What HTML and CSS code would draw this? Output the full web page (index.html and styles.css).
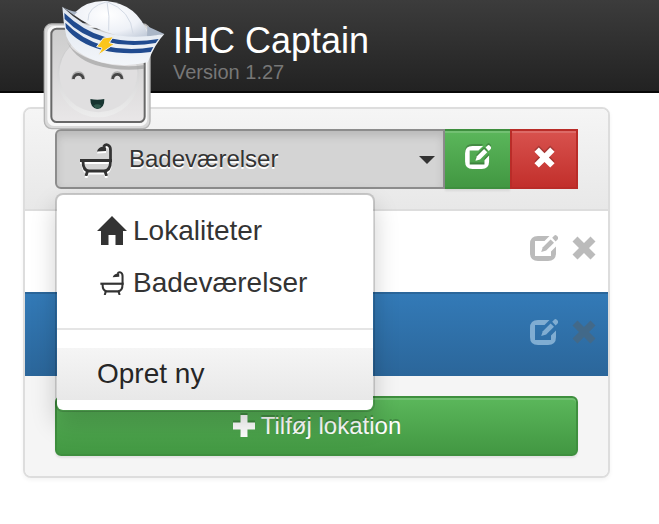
FILE: index.html
```html
<!DOCTYPE html>
<html lang="da">
<head>
    <meta charset="UTF-8">
    <meta name="viewport" content="width=device-width, initial-scale=1.0">
    <title>IHC Captain</title>
    <link rel="stylesheet" href="styles.css">
</head>
<body>
    <!-- Shared icons -->
    <svg class="icon-defs" aria-hidden="true">
        <symbol id="icon-bath" viewBox="0 0 32 33">
            <path d="M30.500 18V7C30.500 1.500 25.500 0 23.500 4" fill="none" stroke="currentColor" stroke-width="2.800"/>
            <path d="M17 8.500C18 5 22 2.500 26 4.500L26 8Z" fill="currentColor"/>
            <path d="M0 17.500H32" stroke="currentColor" stroke-width="3"/>
            <path d="M3 18C3 25 5 28 9 28H24C28 28 30.500 25 30.500 18" fill="none" stroke="currentColor" stroke-width="2.800"/>
            <path d="M7.500 28L6 33M25 28L26.500 33" stroke="currentColor" stroke-width="2.800"/>
        </symbol>
        <symbol id="icon-home" viewBox="0 0 30 30">
            <path d="M15 0L30 15H26V29H18.500V19H11.500V29H4V15H0Z" fill="currentColor"/>
        </symbol>
        <symbol id="icon-edit" viewBox="0 0 28 26">
            <path d="M19.500 1H8Q0 1 0 9V18Q0 26 8 26H18Q26 26 26 18V11.500L21 16.500V21H5V6H14.500Z" fill="currentColor"/>
            <path d="M11.200 17L12.800 12.200L20.600 4.400L24 7.800L16.200 15.600Z" fill="currentColor"/>
            <path d="M22.200 2.800L24.400 .6Q25.500 -.5 26.800 .8L27.800 1.800Q29 3 27.800 4.200L25.600 6.400Z" fill="currentColor"/>
        </symbol>
        <symbol id="icon-remove" viewBox="0 0 24 24">
            <path d="M5.500 .5L12 7L18.500 .5L23.500 5.500L17 12L23.500 18.500L18.500 23.500L12 17L5.500 23.500L.5 18.500L7 12L.5 5.500Z" fill="currentColor"/>
        </symbol>
        <symbol id="icon-plus" viewBox="0 0 24 24">
            <path d="M8.500 1H15.500V8.500H23V15.500H15.500V23H8.500V15.500H1V8.500H8.500Z" fill="currentColor"/>
        </symbol>
    </svg>

    <header class="navbar">
        <svg class="logo" viewBox="36 0 375 390" aria-hidden="true">
            <defs>
                <linearGradient id="plate" x1="0" y1="0" x2="0" y2="1">
                    <stop offset="0" stop-color="#ccc"/>
                    <stop offset="1" stop-color="#e9e7e8"/>
                </linearGradient>
                <linearGradient id="face" x1="0" y1="0" x2="0" y2="1">
                    <stop offset="0" stop-color="#c4c4c5"/>
                    <stop offset="1" stop-color="#ededed"/>
                </linearGradient>
                <radialGradient id="crown" cx=".45" cy=".35" r=".75">
                    <stop offset="0" stop-color="#fff"/>
                    <stop offset=".6" stop-color="#eef1f7"/>
                    <stop offset="1" stop-color="#c3ccda"/>
                </radialGradient>
                <linearGradient id="brim" x1="0" y1="0" x2="0" y2="1">
                    <stop offset="0" stop-color="#dde4ee"/>
                    <stop offset="1" stop-color="#f3f6fa"/>
                </linearGradient>
            </defs>
            <rect x="43" y="72" width="317" height="314" rx="22" fill="#d9d9d9" stroke="#b5b5b5" stroke-width="4"/>
            <rect x="52" y="78" width="300" height="300" rx="20" fill="#f8f8f8"/>
            <rect x="64" y="86" width="280" height="280" rx="16" fill="url(#plate)" stroke="#686868" stroke-width="6"/>
            <circle cx="205" cy="228" r="124" fill="url(#face)"/>
            <circle cx="205" cy="220" r="117" fill="#e0dfe0"/>
            <path d="M126 238Q128 216 145 216Q162 216 163 238M244 238Q246 216 262 216Q277 216 279 238" fill="none" stroke="#aaa" stroke-width="4"/>
            <path d="M130 237Q132 223 145 223Q158 223 160 237M248 237Q250 223 262 223Q274 223 276 237" fill="none" stroke="#454545" stroke-width="8"/>
            <path d="M181 297Q202 301 223 297Q224 326 202 327Q181 325 181 297Z" fill="#183531"/>
            <path d="M190 317Q202 309 214 317Q209 326 202 326Q195 325 190 317Z" fill="#31594d"/>
            <path d="M107 115Q121 160 200 184Q270 206 344 195L342 206Q270 216 196 195Q128 174 107 115Z" fill="#929292" opacity=".55"/>
            <path d="M136 36Q172 0 229 3Q323 12 354 103L346 120Q222 111 131 44Z" fill="url(#crown)"/>
            <path d="M231 5Q172 20 174 61M231 5Q240 49 236 92M231 5Q303 32 309 101" fill="none" stroke="#d3dae5" stroke-width="3"/>
            <path d="M97 20Q114 31 142 36L132 46Z" fill="#aab6c7"/>
            <path d="M352 79L403 102L351 113Z" fill="#aab6c7"/>
            <path d="M97 20Q157 78 218 96Q301 121 403 102Q376 130 353 187Q283 204 213 187Q132 165 109 109Q99 66 97 20Z" fill="url(#brim)"/>
            <path d="M103 39Q159 93 227 112Q301 131 386 117L377 129Q300 142 223 125Q151 107 104 57Z" fill="#214b8f"/>
            <path d="M106 68Q153 116 221 137Q295 155 370 141L362 156Q284 166 216 150Q143 130 108 85Z" fill="#214b8f"/>
            <path d="M220 114L250 110L238 128L253 132L205 165L216 144L200 140Z" fill="#fbc51b" stroke="#eef1f7" stroke-width="3"/>
        </svg>
        <div class="brand">
            <h1>IHC Captain</h1>
            <span class="version">Version 1.27</span>
        </div>
    </header>

    <main class="panel">
        <div class="panel-heading">
            <div class="btn-group">
                <button type="button" class="btn btn-select" aria-haspopup="true" aria-expanded="true">
                    <svg class="icon-bath"><use href="#icon-bath"/></svg>
                    <span>Badeværelser</span>
                    <span class="caret"></span>
                </button>
                <button type="button" class="btn btn-success btn-edit" aria-label="Rediger">
                    <svg class="icon-edit"><use href="#icon-edit"/></svg>
                </button>
                <button type="button" class="btn btn-danger" aria-label="Slet">
                    <svg class="icon-remove"><use href="#icon-remove"/></svg>
                </button>

                <ul class="dropdown-menu">
                    <li><a href="#"><svg class="menu-icon"><use href="#icon-home"/></svg>Lokaliteter</a></li>
                    <li><a href="#"><svg class="menu-icon menu-icon-bath"><use href="#icon-bath"/></svg>Badeværelser</a></li>
                    <li class="divider"></li>
                    <li><a href="#" class="hover">Opret ny</a></li>
                </ul>
            </div>
        </div>

        <ul class="list">
            <li class="list-item">
                <button type="button" class="action" aria-label="Rediger"><svg class="action-edit"><use href="#icon-edit"/></svg></button>
                <button type="button" class="action" aria-label="Slet"><svg class="action-remove"><use href="#icon-remove"/></svg></button>
            </li>
            <li class="list-item active">
                <button type="button" class="action" aria-label="Rediger"><svg class="action-edit"><use href="#icon-edit"/></svg></button>
                <button type="button" class="action remove" aria-label="Slet"><svg class="action-remove"><use href="#icon-remove"/></svg></button>
            </li>
        </ul>

        <div class="panel-footer">
            <button type="button" class="btn btn-success btn-add">
                <svg class="icon-plus"><use href="#icon-plus"/></svg>
                <span>Tilføj lokation</span>
            </button>
        </div>
    </main>
</body>
</html>
```
FILE: styles.css
```css
* {
    box-sizing: border-box;
}
body {
    margin: 0;
    background-color: #fff;
    color: #333;
    font-family: "Liberation Sans", Arial, sans-serif;
    font-size: 24px;
}
ul {
    margin: 0;
    padding: 0;
    list-style: none;
}
button {
    font: inherit;
    cursor: pointer;
}
svg {
    display: block;
    flex: none;
    overflow: visible;
}
.icon-defs {
    position: absolute;
    width: 0;
    height: 0;
}

/* Header */
.navbar {
    position: relative;
    padding: 20px 20px 8px 173px;
    background: linear-gradient(#3c3c3c, #222);
    border-bottom: 2px solid #080808;
}
.logo {
    position: absolute;
    top: 0;
    left: 42px;
    z-index: 10;
    width: 125px;
    height: 130px;
}
h1 {
    margin: 0;
    color: #fff;
    font-size: 36px;
    font-weight: normal;
    line-height: 41px;
}
.version {
    display: block;
    color: #777;
    font-size: 20px;
    line-height: 22px;
}

/* Panel */
.panel {
    margin: 14px 49px 24px 23px;
    border: 2px solid #ddd;
    border-radius: 8px;
    background-color: #fff;
    box-shadow: 0 2px 4px rgba(0, 0, 0, 0.05);
}
.panel-heading {
    padding: 20px 30px;
    border-bottom: 2px solid #ddd;
    border-radius: 6px 6px 0 0;
    background: linear-gradient(#f5f5f5, #e8e8e8);
}
.panel-footer {
    padding: 20px 30px;
    border-radius: 0 0 6px 6px;
    background-color: #f5f5f5;
}

/* Buttons */
.btn-group {
    position: relative;
    display: flex;
}
.btn {
    display: flex;
    align-items: center;
    justify-content: center;
    height: 60px;
    padding: 0;
    border: 2px solid;
}
.btn-select {
    flex: 1;
    justify-content: flex-start;
    gap: 17px;
    padding: 0 8px 0 23px;
    border-color: #8c8c8c;
    border-radius: 6px 0 0 6px;
    background-color: #d4d4d4;
    box-shadow: inset 0 5px 8px rgba(0, 0, 0, 0.13);
    color: #333;
    text-shadow: 0 2px 0 #fff;
}
.caret {
    margin: 2px 0 0 auto;
    border-top: 8px solid #333;
    border-right: 8px solid transparent;
    border-left: 8px solid transparent;
}
.btn-success {
    border-color: #3e8f3e;
    background: linear-gradient(#5cb85c, #419641) border-box;
    box-shadow: inset 0 2px 0 rgba(255, 255, 255, 0.15), 0 2px 2px rgba(0, 0, 0, 0.08);
    color: #fff;
    text-shadow: 0 -2px 0 rgba(0, 0, 0, 0.2);
}
.btn-edit {
    width: 65px;
    padding-bottom: 4px;
    border-right: 0;
    border-left: 0;
}
.btn-danger {
    width: 68px;
    padding-bottom: 4px;
    border-color: #b92c28;
    background: linear-gradient(#d9534f, #c12e2a) border-box;
    box-shadow: inset 0 2px 0 rgba(255, 255, 255, 0.15);
    color: #fff;
}
.btn-add {
    width: 100%;
    gap: 5px;
    border-radius: 6px;
}
.icon-bath {
    width: 32px;
    height: 33px;
    filter: drop-shadow(0 2px 0 #fff);
}
.icon-edit {
    width: 26px;
    height: 24px;
    filter: drop-shadow(0 -2px 0 rgba(0, 0, 0, 0.2));
}
.icon-remove {
    width: 21px;
    height: 21px;
    filter: drop-shadow(0 -2px 0 rgba(0, 0, 0, 0.2));
}
.icon-plus {
    width: 24px;
    height: 24px;
    filter: drop-shadow(0 -2px 0 rgba(0, 0, 0, 0.2));
}

/* Dropdown */
.dropdown-menu {
    position: absolute;
    top: 100%;
    left: 0;
    z-index: 5;
    min-width: 320px;
    margin-top: 4px;
    padding: 10px 0;
    border: 2px solid rgba(0, 0, 0, 0.15);
    border-radius: 8px;
    background-color: #fff;
    background-clip: padding-box;
    box-shadow: 0 12px 24px rgba(0, 0, 0, 0.18);
}
.dropdown-menu a {
    display: flex;
    align-items: center;
    gap: 6px;
    height: 52px;
    padding: 0 40px;
    color: #333;
    font-size: 28px;
    text-decoration: none;
}
.dropdown-menu a:hover,
.dropdown-menu .hover {
    background: linear-gradient(#f5f5f5, #e8e8e8);
    color: #262626;
}
.dropdown-menu .divider {
    height: 2px;
    margin: 19px 0 18px;
    background-color: #e5e5e5;
}
.menu-icon {
    width: 30px;
    height: 30px;
}
.menu-icon-bath {
    height: 24px;
}

/* List */
.list-item {
    display: flex;
    align-items: center;
    justify-content: flex-end;
    gap: 14px;
    height: 81px;
    padding: 0 12px 7px;
}
.list-item.active {
    height: 84px;
    border-top: 2px solid #2b669a;
    background: linear-gradient(#337ab7, #2b669a);
}
.action {
    padding: 0;
    border: 0;
    background: none;
    color: #bbb;
}
.active .action {
    color: #80add2;
}
.active .remove {
    color: #426989;
}
.action-edit {
    width: 28px;
    height: 26px;
}
.action-remove {
    width: 24px;
    height: 24px;
}
```
